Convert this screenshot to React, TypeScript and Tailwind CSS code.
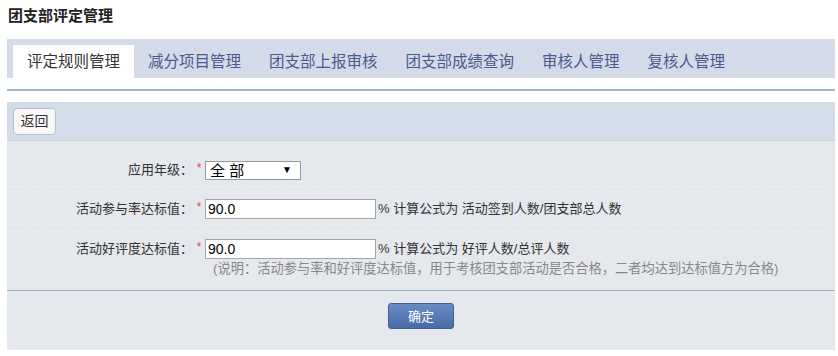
import React from "react";

const tabs = ["评定规则管理", "减分项目管理", "团支部上报审核", "团支部成绩查询", "审核人管理", "复核人管理"];

function Star() {
  return <span className="w-[12px] shrink-0 text-center text-[12px] text-[#f03c3c] leading-none -mt-[4px]">*</span>;
}

export default function App() {
  return (
    <div className="w-[838px] h-[356px] bg-white font-['Liberation_Sans','Noto_Sans_CJK_SC',sans-serif] text-[#333]">
      <div className="h-[39px] pl-[8px] pt-[5px] text-[15px] font-bold leading-[22px] text-[#222]">团支部评定管理</div>
      <div className="ml-[7px] mr-[3px] h-[39px] bg-[#d3dbe8] flex items-end pl-[6px]">
        {tabs.map((t, i) => (
          <div
            key={t}
            className={
              i === 0
                ? "h-[33px] px-[14px] bg-white text-[15.5px] leading-[33px] text-[#333]"
                : "h-[33px] px-[14px] text-[15.5px] leading-[33px] text-[#4b5a8c]"
            }
          >
            {t}
          </div>
        ))}
      </div>
      <div className="ml-[7px] mr-[3px] mt-[11px] h-[2px] bg-[#9bb8cc]" />
      <div className="ml-[7px] mr-[3px] mt-[11px] h-[39px] bg-[#d3dce9] border-b border-[#c9d1dd] flex items-center pl-[6px]">
        <button className="w-[43px] h-[27px] bg-[#f8f8f8] border border-[#b4bfce] rounded-[4px] text-[14px] text-[#333] leading-none">
          返回
        </button>
      </div>
      <div className="ml-[7px] mr-[3px] bg-[#e5e8ed] h-[149px] flex flex-col">
        <div className="pt-[10px] px-0">
          <div className="h-[39px] flex items-center border-b border-dashed border-[#dcdfe4] text-[13px]">
            <span className="w-[186px] text-right">应用年级：</span>
            <Star />
            <div className="w-[96px] h-[19px] bg-white border border-[#999] flex items-center justify-between pl-[4px] pr-[8px]">
              <span className="text-[15px] leading-none text-black">全 部</span>
              <span className="text-[10px] leading-none text-black">▼</span>
            </div>
          </div>
          <div className="h-[39px] flex items-center border-b border-dashed border-[#dcdfe4] text-[13px]">
            <span className="w-[186px] text-right">活动参与率达标值：</span>
            <Star />
            <div className="w-[171px] h-[20px] bg-white border border-[#a5a5a5] flex items-center pl-[2px] text-[14px] text-black">90.0</div>
            <span className="ml-[2px]">% 计算公式为 活动签到人数/团支部总人数</span>
          </div>
          <div className="pt-[10px] text-[13px]">
            <div className="h-[20px] flex items-center">
              <span className="w-[186px] text-right">活动好评度达标值：</span>
              <Star />
              <div className="w-[171px] h-[20px] bg-white border border-[#a5a5a5] flex items-center pl-[2px] text-[14px] text-black">90.0</div>
              <span className="ml-[2px]">% 计算公式为 好评人数/总评人数</span>
            </div>
            <div className="mt-[2px] pl-[206px] text-[13.25px] leading-[16px] text-[#888]">(说明：活动参与率和好评度达标值，用于考核团支部活动是否合格，二者均达到达标值方为合格)</div>
          </div>
        </div>
      </div>
      <div className="ml-[7px] mr-[3px] h-[1px] bg-[#97b4ca]" />
      <div className="ml-[7px] mr-[3px] h-[59px] bg-[#e5e8ed] flex justify-center pt-[12px]">
        <button className="w-[66px] h-[26px] rounded-[3px] border border-[#3f5d92] bg-gradient-to-b from-[#6a8cc6] to-[#4a6aa6] text-white text-[13px] leading-none">
          确定
        </button>
      </div>
    </div>
  );
}
